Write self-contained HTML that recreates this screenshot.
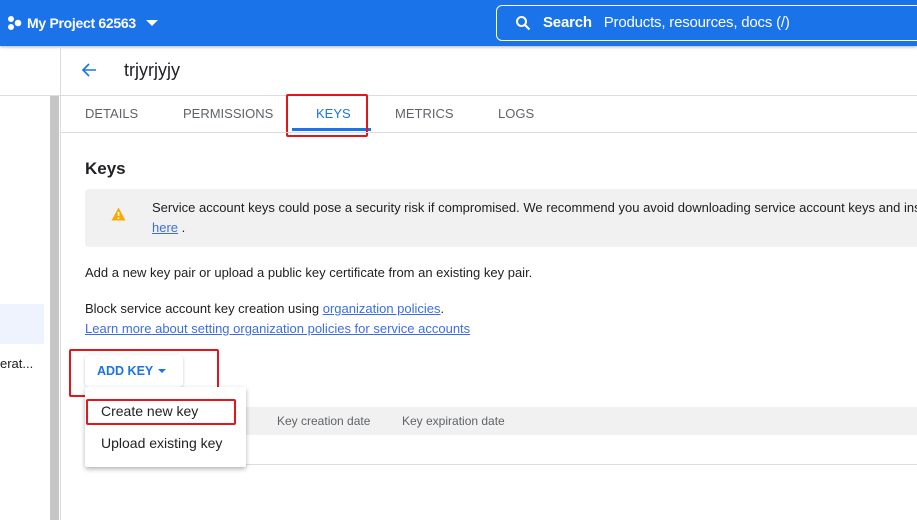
<!DOCTYPE html>
<html><head><style>
*{margin:0;padding:0;box-sizing:border-box}
body{width:917px;height:520px;overflow:hidden;background:#fff;font-family:"Liberation Sans",Roboto,sans-serif;color:#202124;position:relative}
.a{position:absolute}
.hdr{left:0;top:0;width:917px;height:46px;background:#1a73e8;box-shadow:0 1px 3px rgba(0,0,0,.3)}
.link{color:#3b6fe0;text-decoration:underline}
.tab{top:106px;font-size:13px;color:#5f6368;letter-spacing:0}
.red{border:2px solid #e3161c;border-radius:2px}
</style></head><body>
<div class="a hdr"></div>
<svg class="a" style="left:7px;top:15px" width="16" height="16" viewBox="0 0 16 16"><circle cx="4" cy="4" r="3" fill="#fff"/><circle cx="4" cy="12" r="3" fill="#fff"/><circle cx="11" cy="8" r="3.3" fill="#fff"/></svg>
<div class="a" style="left:27px;top:15px;color:#fff;font-size:14px;font-weight:bold;letter-spacing:-0.3px">My Project 62563</div>
<div class="a" style="left:146px;top:20px;width:0;height:0;border-left:6px solid transparent;border-right:6px solid transparent;border-top:6px solid #fff"></div>
<div class="a" style="left:496px;top:5px;width:440px;height:36px;border:1px solid #fff;border-radius:6px"></div>
<svg class="a" style="left:515px;top:15px" width="16" height="16" viewBox="0 0 16 16"><circle cx="6.5" cy="6.5" r="4.5" stroke="#fff" stroke-width="2" fill="none"/><path d="M10 10l4.5 4.5" stroke="#fff" stroke-width="2.2"/></svg>
<div class="a" style="left:543px;top:14px;color:#fff;font-size:15px;letter-spacing:-0.2px"><b>Search</b>&nbsp;&nbsp; Products, resources, docs (/)</div>

<div class="a" style="left:60px;top:46px;width:1px;height:474px;background:#dadce0"></div>
<div class="a" style="left:0;top:95px;width:60px;height:1px;background:#dadce0"></div>
<div class="a" style="left:50px;top:96px;width:9px;height:424px;background:#c6c6c6"></div>
<div class="a" style="left:0;top:304px;width:44px;height:40px;background:#eef3fd"></div>
<div class="a" style="left:0;top:356px;font-size:13px">erat...</div>

<svg class="a" style="left:80px;top:61px" width="18" height="18" viewBox="0 0 18 18"><path d="M16 9H3M9 3L3 9l6 6" stroke="#1a73e8" stroke-width="1.6" fill="none"/></svg>
<div class="a" style="left:124px;top:60px;font-size:18px">trjyrjyjy</div>
<div class="a" style="left:61px;top:95px;width:856px;height:1px;background:#dadce0"></div>
<div class="a tab" style="left:85px">DETAILS</div>
<div class="a tab" style="left:183px">PERMISSIONS</div>
<div class="a tab" style="left:316px;color:#1a73e8">KEYS</div>
<div class="a tab" style="left:395px">METRICS</div>
<div class="a tab" style="left:498px">LOGS</div>
<div class="a" style="left:292px;top:128px;width:79px;height:3px;background:#1a73e8"></div>
<div class="a red" style="left:286px;top:94px;width:82px;height:43px"></div>
<div class="a" style="left:61px;top:132px;width:856px;height:1px;background:#dadce0"></div>

<div class="a" style="left:85px;top:159px;font-size:17px;font-weight:bold;color:#202124">Keys</div>
<div class="a" style="left:85px;top:189px;width:840px;height:58px;background:#f1f1f1;border-radius:4px"></div>
<svg class="a" style="left:111px;top:207px" width="15" height="14" viewBox="0 0 15 14"><path d="M7.5 0.5L14.5 13.5H0.5Z" fill="#f9ab00"/><path d="M7.5 5v4M7.5 10.5v1.5" stroke="#fff" stroke-width="1.6"/></svg>
<div class="a" style="left:152px;top:200px;font-size:13px;white-space:nowrap">Service account keys could pose a security risk if compromised. We recommend you avoid downloading service account keys and ins</div>
<div class="a" style="left:152px;top:220px;font-size:13px"><span class="link">here</span> .</div>
<div class="a" style="left:85px;top:265px;font-size:13px">Add a new key pair or upload a public key certificate from an existing key pair.</div>
<div class="a" style="left:85px;top:301px;font-size:13px">Block service account key creation using <span class="link">organization policies</span>.</div>
<div class="a" style="left:85px;top:321px;font-size:13px"><span class="link">Learn more about setting organization policies for service accounts</span></div>

<div class="a" style="left:85px;top:355px;width:98px;height:32px;border-radius:4px;box-shadow:0 1px 3px rgba(0,0,0,.2);background:#fff"></div>
<div class="a" style="left:97px;top:364px;font-size:12.5px;font-weight:bold;color:#1a73e8">ADD KEY</div>
<div class="a" style="left:158px;top:369px;border-left:4px solid transparent;border-right:4px solid transparent;border-top:4px solid #1a73e8"></div>
<div class="a red" style="left:69px;top:349px;width:150px;height:48px"></div>

<div class="a" style="left:85px;top:407px;width:832px;height:28px;background:#f1f1f1"></div>
<div class="a" style="left:85px;top:464px;width:832px;height:1px;background:#dadce0"></div>
<div class="a" style="left:277px;top:414px;font-size:12px;color:#5f6368">Key creation date</div>
<div class="a" style="left:402px;top:414px;font-size:12px;color:#5f6368">Key expiration date</div>

<div class="a" style="left:85px;top:387px;width:161px;height:80px;background:#fff;box-shadow:0 2px 5px rgba(0,0,0,.3);border-radius:2px"></div>
<div class="a" style="left:101px;top:403px;font-size:14px">Create new key</div>
<div class="a" style="left:101px;top:435px;font-size:14px">Upload existing key</div>
<div class="a red" style="left:86px;top:399px;width:150px;height:26px"></div>
</body></html>
